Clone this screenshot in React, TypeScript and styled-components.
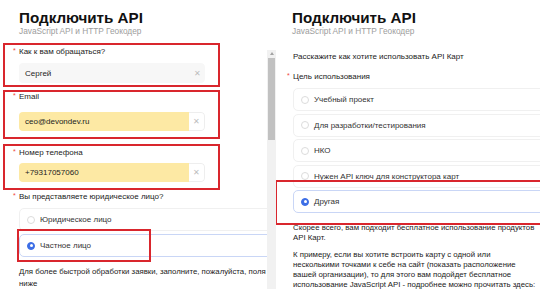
import React from "react";
import styled, { createGlobalStyle } from "styled-components";

const Global = createGlobalStyle`
  html, body { margin: 0; padding: 0; background: #fff; }
  body { font-family: "Liberation Sans", Arial, sans-serif; color: #222; overflow: hidden; }
  * { box-sizing: border-box; }
`;

const RED = "#d9262d";

const Page = styled.div`
  display: flex;
  width: 540px;
  height: 289px;
  overflow: hidden;
  background: #fff;
`;

const LeftPanel = styled.div`
  width: 267px;
  flex: none;
  padding: 8px 0 0 3px;
  overflow: hidden;
  display: flex;
  flex-direction: column;
`;

const RightPanel = styled.div`
  flex: 1;
  min-width: 0;
  padding: 8px 0 0 16px;
  overflow: hidden;
  display: flex;
  flex-direction: column;
`;

const Header = styled.div<{ $indent: number }>`
  padding-left: ${(p) => p.$indent}px;
`;

const Title = styled.div`
  font-size: 15.2px;
  font-weight: 700;
  line-height: 19px;
  color: #111;
  white-space: nowrap;
`;

const Subtitle = styled.div`
  font-size: 8.3px;
  line-height: 9px;
  color: #9d9d9d;
  white-space: nowrap;
`;

const Highlight = styled.div<{ $mt: number; $pt: number; $pb: number }>`
  margin-top: ${(p) => p.$mt}px;
  width: 217px;
  border: 2px solid ${RED};
  padding: ${(p) => p.$pt}px 13px ${(p) => p.$pb}px 14px;
`;

const Label = styled.div<{ $mb?: number; $mt?: number }>`
  position: relative;
  font-size: 8px;
  line-height: 10px;
  color: #222;
  white-space: nowrap;
  margin-top: ${(p) => p.$mt ?? 0}px;
  margin-bottom: ${(p) => p.$mb ?? 0}px;
`;

const Req = styled.span`
  position: absolute;
  left: -6px;
  top: -1px;
  color: #f0473c;
  font-size: 7px;
`;

const InputRow = styled.div<{ $h: number }>`
  display: flex;
  height: ${(p) => p.$h}px;
  border-radius: 4px;
  overflow: hidden;
`;

const InputValue = styled.div<{ $fill: boolean }>`
  flex: 1;
  display: flex;
  align-items: center;
  padding-left: 6px;
  font-size: 8px;
  color: #222;
  background: ${(p) => (p.$fill ? "#fde9a4" : "#f7f7f7")};
`;

const ClearBtn = styled.div<{ $fill: boolean }>`
  width: 16px;
  flex: none;
  display: flex;
  align-items: center;
  justify-content: center;
  color: #bdbdbd;
  font-size: 8px;
  background: ${(p) => (p.$fill ? "#fff" : "#f7f7f7")};
  border: ${(p) => (p.$fill ? "1px solid #eee" : "none")};
  border-left: none;
  border-radius: 0 4px 4px 0;
`;

const Indented = styled.div<{ $mt: number; $pl: number }>`
  margin-top: ${(p) => p.$mt}px;
  padding-left: ${(p) => p.$pl}px;
`;

const Option = styled.div<{ $selected?: boolean; $mt: number }>`
  position: relative;
  display: flex;
  align-items: center;
  height: 23px;
  margin-top: ${(p) => p.$mt}px;
  padding-left: 7px;
  gap: 5px;
  border: 1px solid ${(p) => (p.$selected ? "#c9d6f6" : "#f0f0f0")};
  border-radius: 5px;
  margin-right: -40px;
  font-size: 8px;
  color: #333;
  white-space: nowrap;
`;

const Radio = styled.span<{ $on?: boolean }>`
  width: 8px;
  height: 8px;
  border-radius: 50%;
  flex: none;
  background: ${(p) => (p.$on ? "#3d6ee6" : "#fff")};
  border: 1px solid ${(p) => (p.$on ? "#3d6ee6" : "#dcdcdc")};
  display: flex;
  align-items: center;
  justify-content: center;
  &::after {
    content: "";
    display: ${(p) => (p.$on ? "block" : "none")};
    width: 3px;
    height: 3px;
    border-radius: 50%;
    background: #fff;
  }
`;

const Mark = styled.div<{ $l: number; $t: number; $w: string; $h: number }>`
  position: absolute;
  left: ${(p) => p.$l}px;
  top: ${(p) => p.$t}px;
  width: ${(p) => p.$w};
  height: ${(p) => p.$h}px;
  border: 2px solid ${RED};
  pointer-events: none;
`;

const Para = styled.p<{ $mt: number; $lh: number }>`
  margin: ${(p) => p.$mt}px 0 0;
  font-size: 7.8px;
  line-height: ${(p) => p.$lh}px;
  color: #222;
  white-space: nowrap;
`;

const ScrollColumn = styled.div`
  width: 9px;
  flex: none;
  padding-top: 50px;
  display: flex;
`;

const Track = styled.div`
  flex: 1;
  background: #f1f1f1;
  display: flex;
  flex-direction: column;
  align-items: center;
  padding-top: 2px;
`;

const Arrow = styled.div`
  width: 0;
  height: 0;
  border-left: 2px solid transparent;
  border-right: 2px solid transparent;
  border-bottom: 3px solid #a3a3a3;
`;

const Thumb = styled.div`
  margin-top: 3px;
  width: 7px;
  height: 82px;
  background: #c1c1c1;
`;

const Field = ({
  label,
  value,
  fill,
  h,
  mb,
}: {
  label: string;
  value: string;
  fill: boolean;
  h: number;
  mb: number;
}) => (
  <>
    <Label $mb={mb}>
      <Req>*</Req>
      {label}
    </Label>
    <InputRow $h={h}>
      <InputValue $fill={fill}>{value}</InputValue>
      <ClearBtn $fill={fill}>✕</ClearBtn>
    </InputRow>
  </>
);

export default function App() {
  return (
    <>
      <Global />
      <Page>
        <LeftPanel>
          <Header $indent={16}>
            <Title>Подключить API</Title>
            <Subtitle>JavaScript API и HTTP Геокодер</Subtitle>
          </Header>
          <Highlight $mt={7} $pt={2} $pb={2}>
            <Field label="Как к вам обращаться?" value="Сергей" fill={false} h={20} mb={6} />
          </Highlight>
          <Highlight $mt={3} $pt={0} $pb={6}>
            <Field label="Email" value="ceo@devondev.ru" fill={true} h={19} mb={10} />
          </Highlight>
          <Highlight $mt={5} $pt={2} $pb={6}>
            <Field label="Номер телефона" value="+79317057060" fill={true} h={19} mb={5} />
          </Highlight>
          <Indented $mt={2} $pl={16}>
            <Label>
              <Req>*</Req>
              Вы представляете юридическое лицо?
            </Label>
            <Option $mt={6}>
              <Radio />
              Юридическое лицо
            </Option>
            <Option $mt={3} $selected>
              <Radio $on />
              Частное лицо
              <Mark $l={-3} $t={-6} $w="134px" $h={33} />
            </Option>
            <Para $mt={9} $lh={12}>
              Для более быстрой обработки заявки, заполните, пожалуйста, поля
              <br />
              ниже
            </Para>
          </Indented>
        </LeftPanel>
        <ScrollColumn>
          <Track>
            <Arrow />
            <Thumb />
          </Track>
        </ScrollColumn>
        <RightPanel>
          <Title>Подключить API</Title>
          <Subtitle>JavaScript API и HTTP Геокодер</Subtitle>
          <Indented $mt={16} $pl={1}>
            <Label>Расскажите как хотите использовать API Карт</Label>
            <Label $mt={10}>
              <Req>*</Req>
              Цель использования
            </Label>
            <Option $mt={6}>
              <Radio />
              Учебный проект
            </Option>
            <Option $mt={2.5}>
              <Radio />
              Для разработки/тестирования
            </Option>
            <Option $mt={2.5}>
              <Radio />
              НКО
            </Option>
            <Option $mt={2.5}>
              <Radio />
              Нужен API ключ для конструктора карт
            </Option>
            <Option $mt={2.5} $selected>
              <Radio $on />
              Другая
              <Mark $l={-19} $t={-11} $w="calc(100% + 40px)" $h={45} />
            </Option>
            <Para $mt={10} $lh={9.7}>
              Скорее всего, вам подходит бесплатное использование продуктов
              <br />
              API Карт.
            </Para>
            <Para $mt={8} $lh={9.7}>
              К примеру, если вы хотите встроить карту с одной или
              <br />
              несколькими точками к себе на сайт (показать расположение
              <br />
              вашей организации), то для этого вам подойдет бесплатное
              <br />
              использование JavaScript API - подробнее можно прочитать здесь:
            </Para>
          </Indented>
        </RightPanel>
      </Page>
    </>
  );
}
